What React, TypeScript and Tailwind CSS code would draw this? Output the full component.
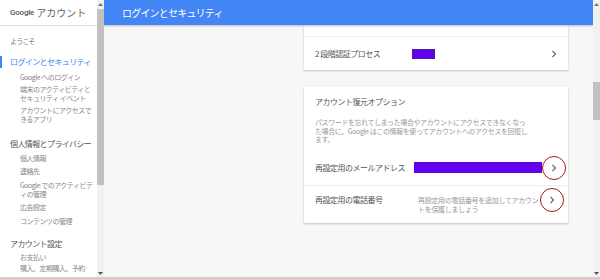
import React from "react";

const jp = { fontFamily: '"Noto Sans CJK JP", "Noto Sans", sans-serif' };

function Chevron() {
  return (
    <svg width="6" height="8" viewBox="0 0 6 8" className="block">
      <path d="M1.5 1 L4.5 4 L1.5 7" fill="none" stroke="#666" strokeWidth="1.2" />
    </svg>
  );
}

function Circled() {
  return (
    <div className="relative w-[24px] h-[24px] shrink-0 flex items-center justify-center">
      <div className="absolute inset-0 rounded-full border-[1.5px] border-[#9e1b20]" />
      <Chevron />
    </div>
  );
}

function Scrollbar({ thumbTop, thumbHeight }: { thumbTop: number; thumbHeight: number }) {
  return (
    <div className="w-[7px] h-full bg-[#f1f1f1] flex flex-col items-center">
      <div className="h-[8px] flex items-center justify-center">
        <svg width="5" height="3" viewBox="0 0 5 3"><path d="M0 3 L2.5 0 L5 3Z" fill="#777" /></svg>
      </div>
      <div className="w-full flex-1 flex flex-col">
        <div style={{ height: thumbTop }} />
        <div className="w-full bg-[#c1c1c1]" style={{ height: thumbHeight }} />
        <div className="flex-1" />
      </div>
      <div className="h-[8px] flex items-center justify-center">
        <svg width="5" height="3" viewBox="0 0 5 3"><path d="M0 0 L2.5 3 L5 0Z" fill="#555" /></svg>
      </div>
    </div>
  );
}

function SubItem({ children }: { children: React.ReactNode }) {
  return (
    <div className="pl-[20px] whitespace-nowrap text-[7px] leading-[9px] tracking-[-0.5px] text-[#888]">
      {children}
    </div>
  );
}

function Heading({ children, className = "" }: { children: React.ReactNode; className?: string }) {
  return (
    <div className={"pl-[10px] whitespace-nowrap text-[8px] leading-[10px] tracking-[-0.6px] text-[#555] " + className}>
      {children}
    </div>
  );
}

function Sidebar() {
  return (
    <div className="w-[97px] h-full bg-white flex flex-col overflow-hidden" style={jp}>
      <div className="h-[26px] shrink-0 border-b border-[#e0e0e0] flex items-center pl-[10px] whitespace-nowrap">
        <span
          style={{ fontFamily: 'Roboto, "Liberation Sans", sans-serif' }}
          className="font-medium text-[8px] tracking-[-0.2px] text-[#555]"
        >
          Google
        </span>
        <span className="ml-[2px] text-[10px] text-[#666]">アカウント</span>
      </div>
      <div className="pl-[10px] mt-[10px] text-[7px] leading-[10px] tracking-[-0.8px] text-[#777]">ようこそ</div>
      <div className="relative mt-[11px]">
        <div className="absolute left-0 top-[-1px] w-[2px] h-[12px] bg-[#4285f4]" />
        <Heading className="!text-[#4285f4]">ログインとセキュリティ</Heading>
      </div>
      <div className="mt-[5.5px] flex flex-col gap-[3px]">
        <SubItem>Google へのログイン</SubItem>
        <SubItem>
          端末のアクティビティと
          <br />
          セキュリティ イベント
        </SubItem>
        <SubItem>
          アカウントにアクセスで
          <br />
          きるアプリ
        </SubItem>
      </div>
      <Heading className="mt-[15.5px]">個人情報とプライバシー</Heading>
      <div className="mt-[4.5px] flex flex-col gap-[4.5px]">
        <SubItem>個人情報</SubItem>
        <SubItem>連絡先</SubItem>
        <SubItem>
          Google でのアクティビテ
          <br />
          ィの管理
        </SubItem>
        <SubItem>広告設定</SubItem>
        <SubItem>コンテンツの管理</SubItem>
      </div>
      <Heading className="mt-[13.5px]">アカウント設定</Heading>
      <div className="mt-[3.5px] flex flex-col gap-[2px]">
        <SubItem>お支払い</SubItem>
        <SubItem>購入、定期購入、予約</SubItem>
      </div>
    </div>
  );
}

function Main() {
  return (
    <div className="w-[489px] h-full flex flex-col bg-[#f7f7f7] overflow-hidden" style={jp}>
      <div className="h-[25px] shrink-0 bg-[#4285f4] shadow-[0_1px_2px_rgba(0,0,0,0.25)] flex items-center pl-[18px] text-[10px] tracking-[-0.8px] text-white z-10">
        ログインとセキュリティ
      </div>
      <div className="flex flex-col pl-[200px] pr-[25px]">
        <div className="bg-white shadow-[0_1px_2px_rgba(0,0,0,0.22)]">
          <div className="h-[12px] border-b border-[#eeeeee]" />
          <div className="h-[33px] flex items-center pl-[11px] pr-[11px] text-[8px] tracking-[-0.5px] text-[#555]">
            <div className="w-[97px] whitespace-nowrap">2 段階認証プロセス</div>
            <div className="w-[23px] h-[10px] bg-[#6200ea] border border-[#4b1fa3]" />
            <div className="flex-1" />
            <Chevron />
          </div>
        </div>
        <div className="mt-[17px] bg-white shadow-[0_1px_2px_rgba(0,0,0,0.22)]">
          <div className="pt-[10px] pl-[11px] text-[8px] leading-[10px] tracking-[-0.5px] text-[#555]">
            アカウント復元オプション
          </div>
          <div className="mt-[11px] pl-[11px] whitespace-nowrap text-[7px] leading-[8.5px] tracking-[-0.4px] text-[#999]">
            パスワードを忘れてしまった場合やアカウントにアクセスできなくなっ
            <br />
            た場合に、Google はこの情報を使ってアカウントへのアクセスを回復し
            <br />
            ます。
          </div>
          <div className="h-[36px] mt-[6.5px] border-b border-[#eeeeee] flex items-center pl-[11px] text-[8px] tracking-[-0.5px] text-[#555]">
            <div className="w-[99px] whitespace-nowrap">再設定用のメールアドレス</div>
            <div className="w-[128px] h-[11px] bg-[#6200ea]" />
            <Circled />
          </div>
          <div className="h-[37px] flex items-start pl-[11px] text-[8px] tracking-[-0.5px] text-[#555]">
            <div className="w-[103px] mt-[9px] leading-[10px] whitespace-nowrap">再設定用の電話番号</div>
            <div className="w-[122px] mt-[9.5px] whitespace-nowrap text-[7px] leading-[9px] tracking-[-0.3px] text-[#999]">
              再設定用の電話番号を追加してアカウン
              <br />
              トを保護しましょう
            </div>
            <div className="mt-[2px]">
              <Circled />
            </div>
          </div>
        </div>
      </div>
    </div>
  );
}

export default function App() {
  return (
    <div className="w-[600px] h-[279px] flex flex-col bg-white overflow-hidden">
      <div className="h-[277px] flex">
        <Sidebar />
        <Scrollbar thumbTop={1} thumbHeight={176} />
        <Main />
        <Scrollbar thumbTop={74} thumbHeight={38} />
      </div>
      <div className="h-[2px] bg-[#cfcfcf]" />
    </div>
  );
}
